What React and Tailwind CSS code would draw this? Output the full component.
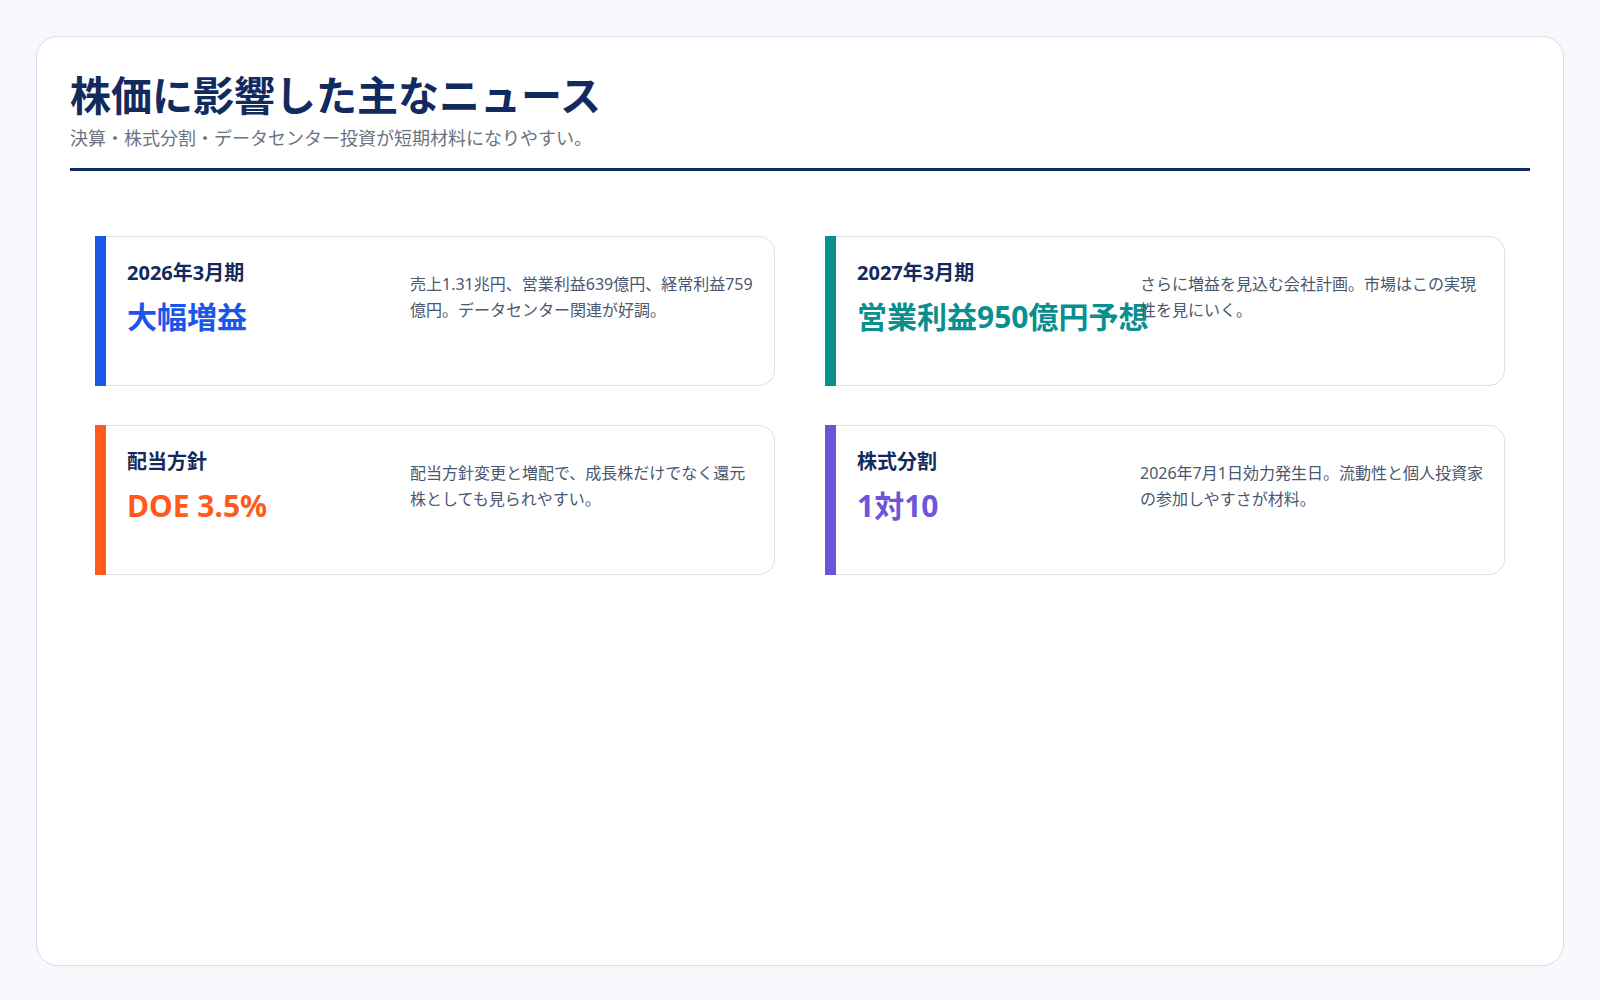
const font = { fontFamily: '"Noto Sans", "Noto Sans CJK JP", sans-serif' };

const items = [
  { label: "2026年3月期", value: "大幅増益", text: "売上1.31兆円、営業利益639億円、経常利益759億円。データセンター関連が好調。", bar: "bg-[#1a56e8]", color: "text-[#1a56e8]" },
  { label: "2027年3月期", value: "営業利益950億円予想", text: "さらに増益を見込む会社計画。市場はこの実現性を見にいく。", bar: "bg-[#0a8f8f]", color: "text-[#0a8f8f]" },
  { label: "配当方針", value: "DOE 3.5%", text: "配当方針変更と増配で、成長株だけでなく還元株としても見られやすい。", bar: "bg-[#ff5a1a]", color: "text-[#ff5a1a]" },
  { label: "株式分割", value: "1対10", text: "2026年7月1日効力発生日。流動性と個人投資家の参加しやすさが材料。", bar: "bg-[#6c56d8]", color: "text-[#6c56d8]" },
];

function NewsCard({ label, value, text, bar, color }) {
  return (
    <div className="flex h-[150px]">
      <div className={`w-[11px] shrink-0 ${bar}`} />
      <div className="flex flex-1 rounded-r-2xl border border-l-0 border-[#dbe3ef] bg-white">
        <div className="w-[304px] shrink-0 pl-[21px] pt-[22px]">
          <div className="text-[20px] font-bold leading-7 text-[#132a5e]">{label}</div>
          <div className={`mt-[10px] whitespace-nowrap text-[30px] font-bold leading-10 ${color}`}>{value}</div>
        </div>
        <div className="flex-1 pr-4 pt-[34px] text-[16px] leading-[26px] text-[#4b5670] break-all">{text}</div>
      </div>
    </div>
  );
}

export default function App() {
  return (
    <div className="min-h-screen bg-[#f7f8fb] p-[36px]" style={font}>
      <div className="h-[930px] rounded-[22px] border border-[#d5deea] bg-white px-[33px] pt-[30px]">
        <h1 className="text-[41px] font-bold leading-[56px] text-[#132a5e]">株価に影響した主なニュース</h1>
        <p className="mt-[2px] text-[18px] text-[#6b7380]">決算・株式分割・データセンター投資が短期材料になりやすい。</p>
        <div className="mt-[16px] h-[3px] bg-[#132a5e]" />
        <div className="mt-[65px] grid grid-cols-2 gap-x-[50px] gap-y-[39px] px-[25px]">
          {items.map((it) => <NewsCard key={it.label} {...it} />)}
        </div>
      </div>
    </div>
  );
}
